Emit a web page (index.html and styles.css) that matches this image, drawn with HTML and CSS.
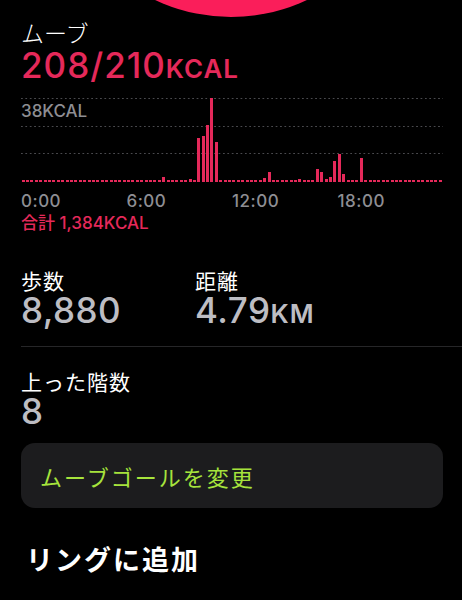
FILE: index.html
```html
<!DOCTYPE html>
<html lang="ja">
<head>
    <meta charset="UTF-8">
    <meta name="viewport" content="width=device-width, initial-scale=1.0">
    <title>アクティビティ</title>
    <link rel="stylesheet" href="styles.css">
</head>
<body>
    <!-- Ring -->
    <div class="ring-wrap">
        <div class="ring"></div>
    </div>

    <main class="page">
        <!-- Move summary -->
        <section class="move">
            <div class="move-title">ムーブ</div>
            <div class="move-value">208/210<span class="unit">KCAL</span></div>

            <div class="chart">
                <div class="grid-lines">
                    <div class="grid-line"></div>
                    <div class="grid-line"></div>
                    <div class="grid-line"></div>
                </div>
                <div class="chart-max">38KCAL</div>
                <div class="bars" id="bars"></div>
            </div>

            <div class="time-axis">
                <span>0:00</span>
                <span>6:00</span>
                <span>12:00</span>
                <span>18:00</span>
            </div>
            <div class="move-total">合計 1,384KCAL</div>
        </section>

        <!-- Steps and distance -->
        <section class="stats">
            <div class="stat">
                <div class="stat-label">歩数</div>
                <div class="stat-value">8,880</div>
            </div>
            <div class="stat">
                <div class="stat-label">距離</div>
                <div class="stat-value">4.79<span class="unit">KM</span></div>
            </div>
        </section>

        <div class="divider"></div>

        <section class="stats">
            <div class="stat">
                <div class="stat-label">上った階数</div>
                <div class="stat-value">8</div>
            </div>
        </section>

        <button class="goal-btn">ムーブゴールを変更</button>

        <h2 class="ring-add">リングに追加</h2>
    </main>

    <script src="chart.js"></script>
</body>
</html>
```

FILE: styles.css
```css
/* Global Styles */
body {
    margin: 0;
    padding: 0;
    background-color: #000;
    color: #fff;
    font-family: Inter, "Noto Sans CJK JP", sans-serif;
    overflow: hidden;
}

/* Ring at the top */
.ring-wrap {
    height: 17px;
    overflow: hidden;
}

.ring {
    width: 356px;
    height: 356px;
    margin: -339px auto 0;
    border-radius: 50%;
    background-color: #fa1e5a;
}

.page {
    padding: 0 19px 0 21px;
}

.unit {
    font-size: 0.74em;
    font-weight: 600;
    letter-spacing: 1px;
}

/* Move section */
.move-title {
    font-family: "Noto Sans CJK JP", sans-serif;
    font-size: 23px;
    font-weight: 300;
    line-height: 26px;
    margin-top: 2px;
}

.move-value {
    color: #e5295a;
    font-size: 35px;
    font-weight: 500;
    line-height: 40px;
    letter-spacing: 1px;
}

/* Chart */
.chart {
    display: grid;
    height: 85px;
    margin-top: 8px;
}

.chart > * {
    grid-area: 1 / 1;
}

.grid-lines {
    display: flex;
    flex-direction: column;
    gap: 26.5px;
    padding-top: 1px;
}

.grid-line {
    height: 1px;
    background-image: linear-gradient(to right, #4a4a4e 1.5px, transparent 1.5px);
    background-size: 4.4px 1px;
}

.chart-max {
    align-self: start;
    margin-top: 5px;
    color: #8e8e93;
    font-size: 17px;
    font-weight: 500;
    line-height: 18px;
}

.bars {
    display: flex;
    align-items: flex-end;
}

.bar-slot {
    flex: 1;
    display: flex;
    justify-content: center;
}

.bar {
    width: 3px;
    background-color: #e5295a;
}

.time-axis {
    display: grid;
    grid-template-columns: repeat(4, 1fr);
    margin-top: 9px;
    color: #8e8e93;
    font-size: 17px;
    font-weight: 500;
    line-height: 20px;
    letter-spacing: 0.5px;
}

.move-total {
    color: #e5295a;
    font-size: 17px;
    font-weight: 500;
    line-height: 20px;
    margin-top: 2px;
}

/* Stats */
.stats {
    display: grid;
    grid-template-columns: 174px 1fr;
}

.move + .stats {
    margin-top: 35px;
}

.stat-label {
    font-family: "Noto Sans CJK JP", sans-serif;
    font-size: 21px;
    font-weight: 400;
    line-height: 24px;
    letter-spacing: 1px;
}

.stat-value {
    color: #bdbdc3;
    font-size: 35px;
    font-weight: 500;
    line-height: 36px;
    letter-spacing: 0.5px;
}

.divider {
    height: 1px;
    background-color: #262628;
    margin: 14px -19px 22px 0;
}

/* Goal button */
.goal-btn {
    display: block;
    width: 100%;
    height: 65px;
    margin-top: 14px;
    padding: 0 19px;
    text-align: left;
    border: none;
    border-radius: 14px;
    background-color: #1c1c1e;
    color: #a6e33c;
    font-family: "Noto Sans CJK JP", sans-serif;
    font-size: 22px;
    font-weight: 400;
    letter-spacing: 2px;
}

.ring-add {
    margin: 35px 0 0 5px;
    font-family: "Noto Sans CJK JP", sans-serif;
    font-size: 27px;
    font-weight: 700;
    line-height: 32px;
    letter-spacing: 2px;
}
```

FILE: chart.js
```js
// kcal per 15-minute slot (96 slots), only the non-zero ones
let activity = {
    32: 2.3, 38: 1.4, 40: 20, 41: 21, 42: 26, 43: 38, 44: 18,
    55: 1.8, 56: 4.5, 63: 1.4, 67: 6, 68: 4.5, 69: 1.4, 70: 2.3,
    71: 9.5, 72: 12.7, 73: 3.6, 77: 10.9
};

let maxKcal = 38;
let chartHeight = 84;
let bars = document.getElementById('bars');

for (let i = 0; i < 96; i++) {
    let kcal = activity[i] || 0;
    let slot = document.createElement('div');
    slot.classList.add('bar-slot');
    let bar = document.createElement('div');
    bar.classList.add('bar');
    bar.style.height = Math.max(2, kcal / maxKcal * chartHeight) + 'px';
    slot.appendChild(bar);
    bars.appendChild(slot);
}
```
